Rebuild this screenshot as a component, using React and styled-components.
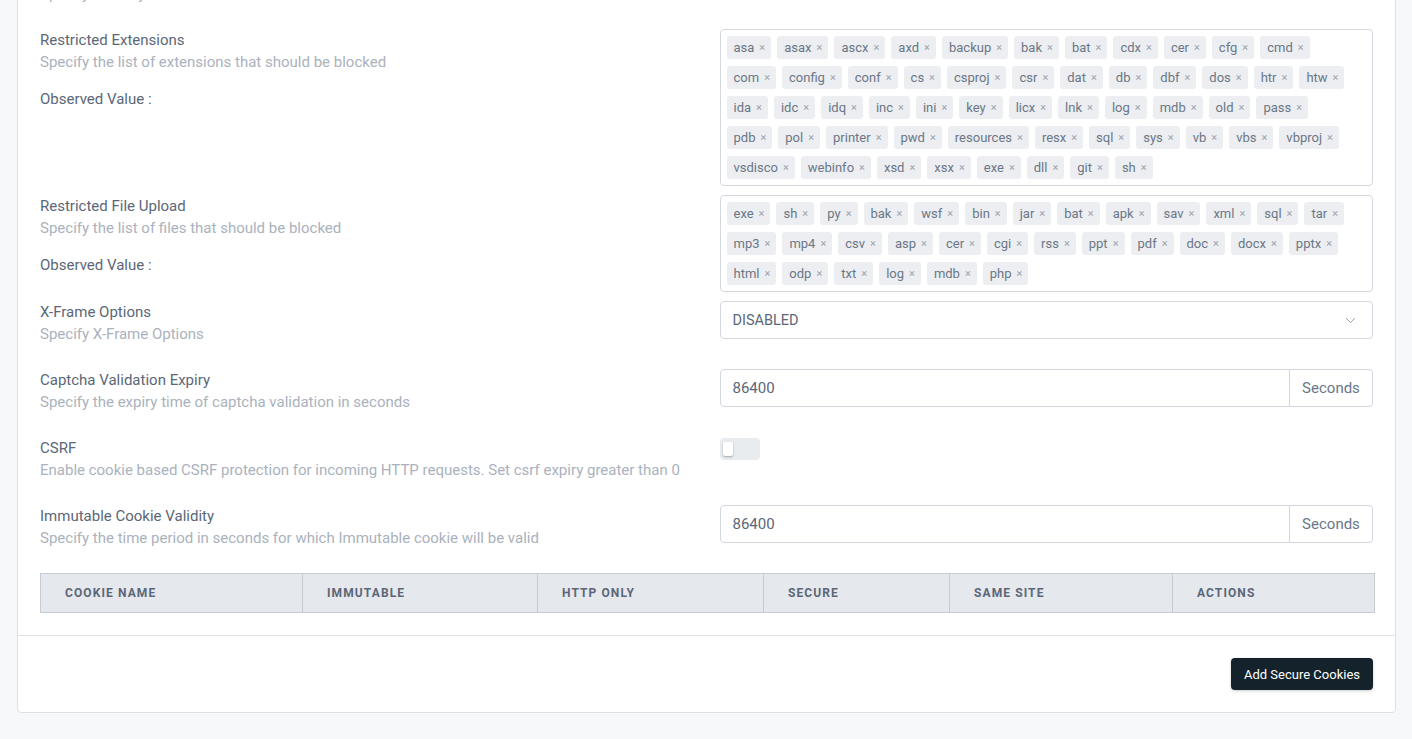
import React from 'react';
import styled, { createGlobalStyle } from 'styled-components';
import { ChevronDown } from 'lucide-react';

const extensions = [
  'asa', 'asax', 'ascx', 'axd', 'backup', 'bak', 'bat', 'cdx', 'cer', 'cfg', 'cmd',
  'com', 'config', 'conf', 'cs', 'csproj', 'csr', 'dat', 'db', 'dbf', 'dos', 'htr', 'htw',
  'ida', 'idc', 'idq', 'inc', 'ini', 'key', 'licx', 'lnk', 'log', 'mdb', 'old', 'pass',
  'pdb', 'pol', 'printer', 'pwd', 'resources', 'resx', 'sql', 'sys', 'vb', 'vbs', 'vbproj',
  'vsdisco', 'webinfo', 'xsd', 'xsx', 'exe', 'dll', 'git', 'sh',
];

const files = [
  'exe', 'sh', 'py', 'bak', 'wsf', 'bin', 'jar', 'bat', 'apk', 'sav', 'xml', 'sql', 'tar',
  'mp3', 'mp4', 'csv', 'asp', 'cer', 'cgi', 'rss', 'ppt', 'pdf', 'doc', 'docx', 'pptx',
  'html', 'odp', 'txt', 'log', 'mdb', 'php',
];

const columns = [
  { name: 'Cookie Name', width: 262 },
  { name: 'Immutable', width: 235 },
  { name: 'Http Only', width: 226 },
  { name: 'Secure', width: 186 },
  { name: 'Same Site', width: 223 },
  { name: 'Actions', width: 202 },
];

const GlobalStyle = createGlobalStyle`
  * { box-sizing: border-box; }
  body {
    margin: 0;
    background: #f7f8fa;
    font-family: Roboto, "Noto Sans", sans-serif;
  }
`;

const Setting = ({ label, description, observed, children }) => (
  <Row>
    <Info>
      <Label>{label}</Label>
      <Description>{description}</Description>
      {observed && <Label>Observed Value :</Label>}
    </Info>
    <Control>{children}</Control>
  </Row>
);

const TagList = ({ items }) => (
  <TagBox>
    {items.map((item) => (
      <Tag key={item}>
        {item}
        <Remove>×</Remove>
      </Tag>
    ))}
  </TagBox>
);

const SecondsInput = ({ value }) => (
  <InputGroup>
    <InputText>{value}</InputText>
    <Addon>Seconds</Addon>
  </InputGroup>
);

const App = () => {
  return (
    <Page>
      <GlobalStyle />
      <Card>
        <CardBody>
          <Setting label="Security Headers" description="Specify security headers">
            <InputGroup>
              <InputText>ENABLED</InputText>
            </InputGroup>
          </Setting>
          <Setting
            label="Restricted Extensions"
            description="Specify the list of extensions that should be blocked"
            observed
          >
            <TagList items={extensions} />
          </Setting>
          <Setting
            label="Restricted File Upload"
            description="Specify the list of files that should be blocked"
            observed
          >
            <TagList items={files} />
          </Setting>
          <Setting label="X-Frame Options" description="Specify X-Frame Options">
            <Select>
              DISABLED
              <ChevronDown size={17} strokeWidth={1.3} color="#8b95a1" />
            </Select>
          </Setting>
          <Setting
            label="Captcha Validation Expiry"
            description="Specify the expiry time of captcha validation in seconds"
          >
            <SecondsInput value="86400" />
          </Setting>
          <Setting
            label="CSRF"
            description="Enable cookie based CSRF protection for incoming HTTP requests. Set csrf expiry greater than 0"
          >
            <Switch>
              <Knob />
            </Switch>
          </Setting>
          <Setting
            label="Immutable Cookie Validity"
            description="Specify the time period in seconds for which Immutable cookie will be valid"
          >
            <SecondsInput value="86400" />
          </Setting>
          <Table>
            <colgroup>
              {columns.map((c) => (
                <col key={c.name} style={{ width: c.width }} />
              ))}
            </colgroup>
            <thead>
              <tr>
                {columns.map((c) => (
                  <Th key={c.name}>{c.name}</Th>
                ))}
              </tr>
            </thead>
          </Table>
        </CardBody>
        <CardFooter>
          <DarkButton>Add Secure Cookies</DarkButton>
        </CardFooter>
      </Card>
    </Page>
  );
};

export default App;

const Page = styled.div`
  padding: 0 16px 26px 17px;
`;

const Card = styled.div`
  margin-top: -62px;
  background: #fff;
  border: 1px solid #dde1e6;
  border-radius: 4px;
`;

const CardBody = styled.div`
  padding: 22px 22px 22px 22px;
`;

const Row = styled.div`
  display: grid;
  grid-template-columns: 1fr 1fr;
  column-gap: 26px;
  margin-bottom: 9px;
`;

const Info = styled.div`
  display: flex;
  flex-direction: column;
`;

const Control = styled.div`
  display: flex;
  align-items: flex-start;
`;

const Label = styled.div`
  font-size: 15px;
  line-height: 22px;
  color: #5b6778;
`;

const Description = styled.div`
  font-size: 15px;
  line-height: 22px;
  color: #aab2bd;
  margin-bottom: 15px;
`;

const TagBox = styled.div`
  width: 100%;
  display: flex;
  flex-wrap: wrap;
  gap: 7px 6px;
  padding: 6px 20px 6px 6px;
  border: 1px solid #d3d8de;
  border-radius: 4px;
`;

const Tag = styled.span`
  display: inline-flex;
  align-items: center;
  height: 23px;
  padding: 0 6px 0 7px;
  background: #eceef1;
  border-radius: 3px;
  font-size: 13px;
  color: #6b7787;
`;

const Remove = styled.span`
  margin-left: 5px;
  font-size: 11px;
  color: #9ba4af;
`;

const Select = styled.div`
  width: 100%;
  height: 38px;
  display: flex;
  align-items: center;
  justify-content: space-between;
  padding: 0 13px 0 12px;
  border: 1px solid #d3d8de;
  border-radius: 4px;
  font-size: 14.5px;
  color: #5b6778;
`;

const InputGroup = styled.div`
  width: 100%;
  height: 38px;
  display: flex;
  border: 1px solid #d3d8de;
  border-radius: 4px;
`;

const InputText = styled.div`
  flex: 1;
  display: flex;
  align-items: center;
  padding: 0 12px;
  font-size: 15px;
  color: #5b6778;
`;

const Addon = styled.div`
  width: 83px;
  display: flex;
  align-items: center;
  justify-content: center;
  border-left: 1px solid #d3d8de;
  font-size: 15px;
  color: #6b7787;
`;

const Switch = styled.div`
  margin-top: 1px;
  width: 40px;
  height: 22px;
  border-radius: 4px;
  background: #e9ecef;
  display: flex;
  align-items: center;
  padding-left: 3px;
`;

const Knob = styled.div`
  width: 10px;
  height: 14px;
  border-radius: 2px;
  background: #fff;
  box-shadow: 0 1px 2px rgba(0, 0, 0, 0.3);
`;

const Table = styled.table`
  width: 100%;
  table-layout: fixed;
  border-collapse: collapse;
`;

const Th = styled.th`
  height: 39px;
  padding: 0 24px;
  text-align: left;
  background: #e5e8ec;
  border: 1px solid #c6ccd4;
  font-size: 12px;
  font-weight: 700;
  letter-spacing: 1.1px;
  text-transform: uppercase;
  color: #5b6778;
`;

const CardFooter = styled.div`
  display: flex;
  justify-content: flex-end;
  padding: 22px 22px 22px;
  border-top: 1px solid #dde1e6;
`;

const DarkButton = styled.button`
  height: 32px;
  padding: 0 13px;
  border: none;
  border-radius: 4px;
  background: #13222b;
  color: #fff;
  font-family: Roboto, "Noto Sans", sans-serif;
  font-size: 13px;
  box-shadow: 0 1px 3px rgba(0, 0, 0, 0.2);
`;
